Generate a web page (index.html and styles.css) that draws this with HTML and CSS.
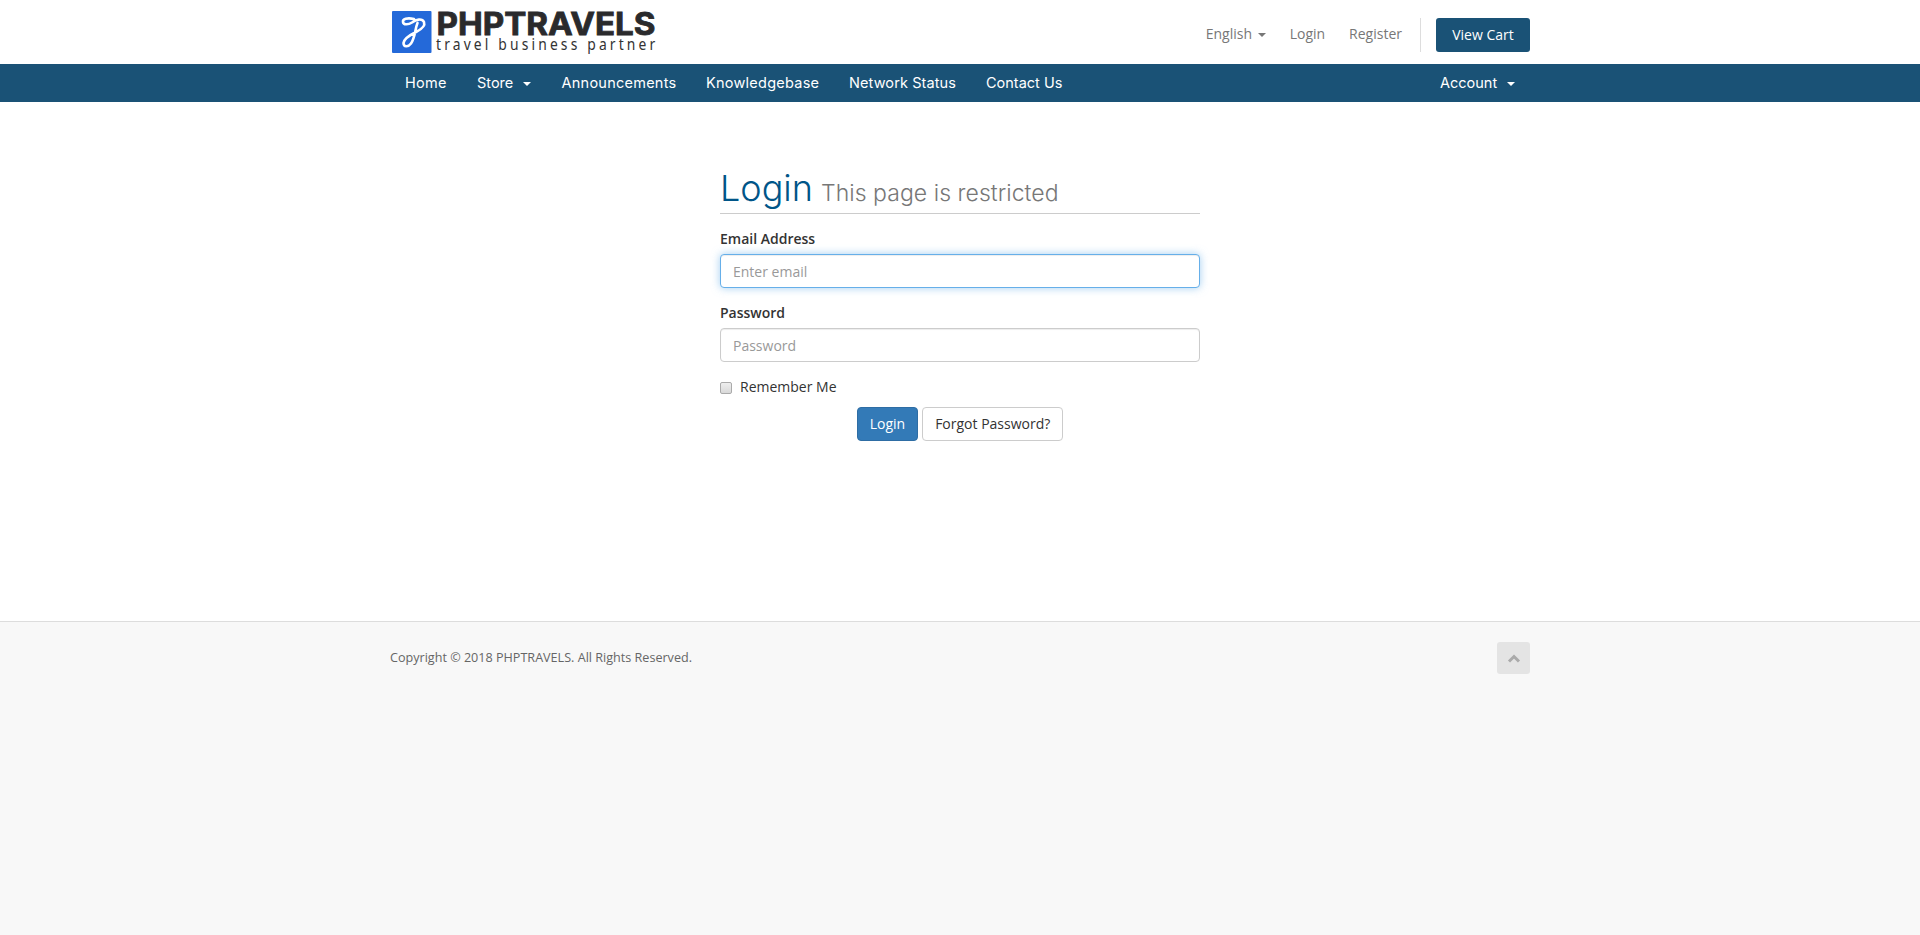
FILE: index.html
```html
<!DOCTYPE html>
<html lang="en">
<head>
<meta charset="utf-8">
<title>Login - PHPTRAVELS</title>
<link rel="stylesheet" href="styles.css">
</head>
<body>
<header class="header">
  <div class="container header-row">
    <a class="logo">
      <svg width="270" height="54" viewBox="0 0 270 54" role="img" aria-label="PHPTRAVELS">
        <rect x="2" y="11" width="39.500" height="42" rx="1" fill="#2469d9"/>
        <path d="M24 19C17 17.500 12.500 19 13 22C13.500 25 18 25 22 22.500C26 19.500 32 18 34 22C35.500 26 31 29.500 26 32C20 35 14 39 13.500 43C13.500 47 18 47.500 21 43.500C25 38 25 29 27.500 23" fill="none" stroke="#fff" stroke-width="2.600" stroke-linecap="round" stroke-linejoin="round"/>
        <text class="logo-name" x="46.500" y="34.500" textLength="219" lengthAdjust="spacingAndGlyphs">PHPTRAVELS</text>
        <text class="logo-tag" transform="translate(46 50) scale(.84 1)" textLength="261">travel business partner</text>
      </svg>
    </a>
    <div class="top-nav">
      <a>English <span class="caret"></span></a>
      <a>Login</a>
      <a>Register</a>
      <a class="cart">View Cart</a>
    </div>
  </div>
</header>
<nav class="menu">
  <div class="container menu-row">
    <a class="m-home">Home</a>
    <a class="m-store">Store <span class="caret"></span></a>
    <a class="m-ann">Announcements</a>
    <a class="m-know">Knowledgebase</a>
    <a class="m-net">Network Status</a>
    <a class="m-contact">Contact Us</a>
    <a class="m-account">Account <span class="caret"></span></a>
  </div>
</nav>
<main class="main">
  <form class="login">
    <h1><span class="title">Login</span><small>This page is restricted</small></h1>
    <label class="label" for="email">Email Address</label>
    <input class="field focused" id="email" type="email" placeholder="Enter email">
    <label class="label" for="pw">Password</label>
    <input class="field" id="pw" type="password" placeholder="Password">
    <label class="remember"><input class="check" type="checkbox"><span>Remember Me</span></label>
    <div class="actions">
      <button class="btn primary" type="button">Login</button>
      <button class="btn" type="button">Forgot Password?</button>
    </div>
  </form>
</main>
<footer class="footer">
  <div class="container footer-row">
    <p>Copyright © 2018 PHPTRAVELS. All Rights Reserved.</p>
    <a class="to-top"><svg width="14" height="9" viewBox="0 0 14 9"><path d="M2 7.500L7 2.500L12 7.500" fill="none" stroke="#aaa" stroke-width="3"/></svg></a>
  </div>
</footer>
</body>
</html>
```
FILE: styles.css
```css
* { box-sizing: border-box; }
body {
  margin: 0;
  min-height: 100vh;
  background: #f8f8f8;
  color: #333;
  font: 14px/20px "Open Sans", "Noto Sans", sans-serif;
}
.container { width: 1140px; margin: 0 auto; }
.header { height: 64px; background: #fff; }
.header-row { display: flex; justify-content: space-between; align-items: flex-start; }
.logo svg { display: block; }
.logo-name { font: 700 31px Inter, sans-serif; fill: #2a2a2c; stroke: #2a2a2c; stroke-width: .8px; }
.logo-tag { font: 400 16.500px "Noto Sans", sans-serif; fill: #333; }
.caret {
  display: inline-block;
  margin-left: 2px;
  vertical-align: middle;
  border-top: 4px solid;
  border-left: 4px solid transparent;
  border-right: 4px solid transparent;
}
.top-nav { display: flex; padding-top: 18px; line-height: 32px; color: #777; }
.top-nav a { margin-right: 24px; }
.top-nav a:nth-child(3) { margin-right: 0; padding-right: 18px; border-right: 1px solid #ddd; height: 34px; }
.top-nav .cart {
  width: 94px;
  height: 34px;
  margin: 0 0 0 15px;
  border-radius: 3px;
  background: #1a5276;
  color: #fff;
  font-weight: 500;
  line-height: 34px;
  text-align: center;
}
.menu { height: 38px; background: #1a5276; color: #fff; }
.menu-row { display: flex; font: 14.500px/38px Inter, sans-serif; white-space: nowrap; }
.menu a { padding-left: 15px; }
.menu .caret { margin-left: 6px; }
.m-home { width: 72px; letter-spacing: .3px; }
.m-store { width: 84.500px; letter-spacing: 0; }
.m-ann { width: 144.500px; letter-spacing: .25px; }
.m-know { width: 143px; letter-spacing: .25px; }
.m-net { width: 137px; letter-spacing: .1px; }
.m-contact { width: 107px; letter-spacing: 0; }
.m-account { width: 105px; margin-left: auto; letter-spacing: 0; }
.main { height: 519px; padding-top: 65px; background: #fff; }
.login { width: 480px; margin: 0 auto; }
.login h1 {
  display: flex;
  align-items: baseline;
  height: 47px;
  margin: 0 0 15px;
  border-bottom: 1px solid #ccc;
  color: #058;
  font: 300 36px/42px Inter, sans-serif;
}
.title { width: 101px; letter-spacing: 0; }
.login small { color: #777; font-size: 23px; letter-spacing: .05px; }
.label { display: block; margin-bottom: 5px; font-weight: 600; }
.field {
  display: block;
  width: 100%;
  height: 34px;
  margin: 0 0 15px;
  padding: 6px 12px;
  border: 1px solid #ccc;
  border-radius: 4px;
  background: #fff;
  box-shadow: inset 0 1px 1px rgba(0,0,0,.075);
  font: 14px/20px "Open Sans", sans-serif;
  outline: 0;
}
.field::placeholder { color: #999; opacity: 1; }
.focused { border-color: #66afe9; box-shadow: inset 0 1px 1px rgba(0,0,0,.075), 0 0 8px rgba(102,175,233,.6); }
.remember { display: flex; align-items: center; height: 20px; margin: 0 0 10px; }
.check {
  appearance: none;
  width: 12px;
  height: 12px;
  margin: 1px 8px 0 0;
  border: 1px solid #aaa;
  border-radius: 2px;
  background: linear-gradient(#eee, #d9d9d9);
}
.actions { display: flex; justify-content: center; gap: 4px; }
.btn {
  height: 34px;
  padding: 0 12px;
  border: 1px solid #ccc;
  border-radius: 4px;
  background: #fff;
  color: #333;
  font: 14px/20px "Open Sans", sans-serif;
}
.primary { border-color: #2e6da4; background: #337ab7; color: #fff; }
.footer { border-top: 1px solid #ddd; background: #f8f8f8; }
.footer-row { display: flex; justify-content: space-between; padding-top: 20px; }
.footer p { margin: 6px 0; color: #666; font-size: 12.600px; }
.to-top {
  display: grid;
  place-items: center;
  width: 33px;
  height: 32px;
  border-radius: 3px;
  background: #e4e4e4;
}
```
